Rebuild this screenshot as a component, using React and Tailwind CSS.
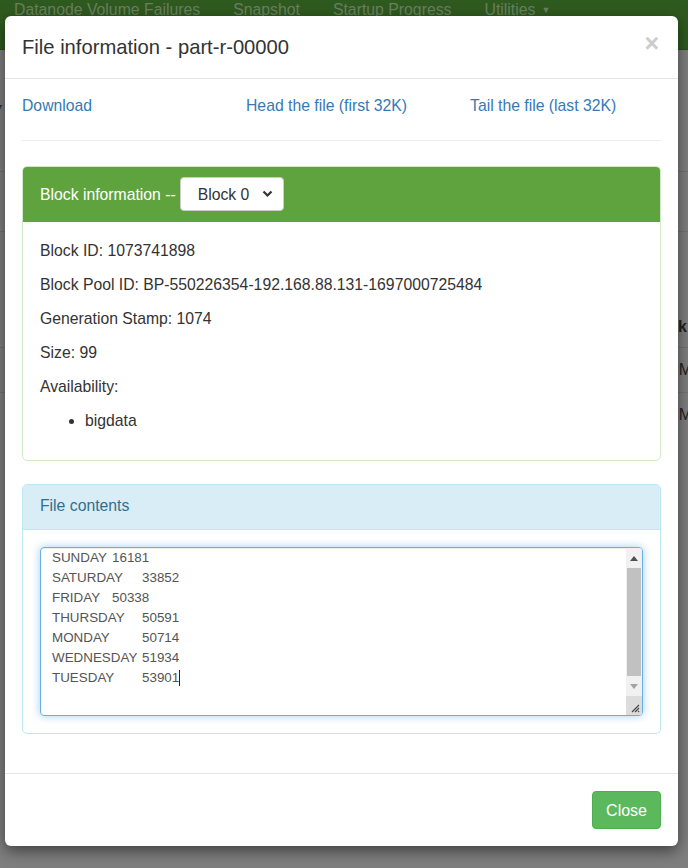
import React from "react";

const rows = [
  { name: "SUNDAY", num: "16181", w: "w-[60px]" },
  { name: "SATURDAY", num: "33852", w: "w-[90px]" },
  { name: "FRIDAY", num: "50338", w: "w-[60px]" },
  { name: "THURSDAY", num: "50591", w: "w-[90px]" },
  { name: "MONDAY", num: "50714", w: "w-[90px]" },
  { name: "WEDNESDAY", num: "51934", w: "w-[90px]" },
  { name: "TUESDAY", num: "53901", w: "w-[90px]", last: true },
];

function BackgroundPage() {
  return (
    <div className="w-[688px] h-[868px] bg-[#7f7f7f] overflow-hidden">
      <div className="h-[50px] bg-[#2f5a1f] border-b border-[#284d1a] flex text-[15.8px] text-[#6a8060] leading-none pt-[2px]">
        <span className="ml-[14px]">Datanode Volume Failures</span>
        <span className="ml-[33px]">Snapshot</span>
        <span className="ml-[33px]">Startup Progress</span>
        <span className="ml-[33px] flex gap-[6px]">
          Utilities
          <span className="text-[9px] mt-[4px]">▼</span>
        </span>
      </div>
      <div className="h-[122px] border-b border-[#727272] pt-[50px] pl-0">
        <span className="block text-[44px] leading-none text-[#333] -ml-[14px] italic font-light">/</span>
      </div>
      <div className="h-[60px] border-b border-[#727272]" />
      <div className="h-[115px] flex justify-end items-end pb-[8px]">
        <span className="text-[16px] font-bold text-[#222] mr-[1px]">k</span>
      </div>
      <div className="h-[45px] border-t border-[#727272] flex justify-end items-center">
        <span className="text-[16px] text-[#222] mr-[-4px]">M</span>
      </div>
      <div className="h-[45px] border-t border-[#727272] flex justify-end items-center">
        <span className="text-[16px] text-[#222] mr-[-4px]">M</span>
      </div>
    </div>
  );
}

function Scrollbar() {
  return (
    <div className="w-[16px] h-full bg-[#f1f1f1] flex flex-col items-center">
      <div className="h-[20px] flex items-center justify-center">
        <svg width="8" height="5" viewBox="0 0 8 5"><path d="M0 5 L4 0 L8 5 Z" fill="#505050" /></svg>
      </div>
      <div className="w-[14px] h-[108px] bg-[#c1c1c1]" />
      <div className="h-[20px] flex items-center justify-center">
        <svg width="8" height="5" viewBox="0 0 8 5"><path d="M0 0 L4 5 L8 0 Z" fill="#a3a3a3" /></svg>
      </div>
      <div className="flex-1 w-full bg-[#dcdcdc] flex items-end justify-end pr-[2px] pb-[2px]">
        <svg width="9" height="9" viewBox="0 0 9 9">
          <path d="M1 8 L8 1 M4 8 L8 4 M7 8 L8 7" stroke="#444" strokeWidth="1.1" />
        </svg>
      </div>
    </div>
  );
}

function Modal() {
  return (
    <div className="absolute left-[5px] top-[16px] w-[673px] bg-white rounded-[6px] shadow-[0_5px_15px_rgba(0,0,0,0.5)] text-[#333] text-[15.75px] leading-[23px]">
      <div className="flex items-start justify-between px-[17px] pt-[17px] pb-[16px] border-b border-[#e5e5e5]">
        <h4 className="text-[20.2px] leading-[29px]">File information - part-r-00000</h4>
        <span className="text-[25px] leading-[22px] font-bold text-[#cccccc] mt-[-1px] mr-[2px]">×</span>
      </div>

      <div className="pt-[15px] px-[17px] pb-[16px]">
        <div className="grid grid-cols-[224px_224px_1fr] text-[#337ab7]">
          <span>Download</span>
          <span>Head the file (first 32K)</span>
          <span>Tail the file (last 32K)</span>
        </div>
        <hr className="mt-[23px] mb-[25px] border-t border-[#eeeeee]" />

        <div className="border border-[#d0e9c6] rounded-[5px] mb-[23px]">
          <div className="bg-[#5fa33e] rounded-t-[4px] px-[17px] pt-[10px] pb-[11px] flex items-center text-white">
            <span>Block information --</span>
            <div className="ml-[4px] w-[104px] h-[34px] bg-white rounded-[4px] border border-[#cccccc] flex items-center justify-between pl-[17px] pr-[10px] text-[#333]">
              <span>Block 0</span>
              <svg width="11" height="8" viewBox="0 0 11 8"><path d="M1.5 1.5 L5.5 5.5 L9.5 1.5" fill="none" stroke="#333" strokeWidth="2.2" /></svg>
            </div>
          </div>
          <div className="pt-[17px] px-[17px] pb-[17px]">
            <p className="mb-[11px]">Block ID: 1073741898</p>
            <p className="mb-[11px]">Block Pool ID: BP-550226354-192.168.88.131-1697000725484</p>
            <p className="mb-[11px]">Generation Stamp: 1074</p>
            <p className="mb-[11px]">Size: 99</p>
            <p className="mb-[11px]">Availability:</p>
            <ul className="list-disc pl-[45px] mb-[11px]">
              <li>bigdata</li>
            </ul>
          </div>
        </div>

        <div className="border border-[#bce8f1] rounded-[5px] mb-[23px]">
          <div className="bg-[#d9edf7] text-[#31708f] rounded-t-[4px] border-b border-[#bce8f1] px-[17px] pt-[9px] pb-[12px]">
            File contents
          </div>
          <div className="pt-[17px] px-[17px] pb-[17px]">
            <div className="h-[169px] border border-[#66afe9] rounded-[4px] shadow-[inset_0_1px_1px_rgba(0,0,0,0.075),0_0_8px_rgba(102,175,233,0.6)] flex overflow-hidden">
              <div className="flex-1 pl-[11px] text-[13.4px] leading-[20px] text-[#555]">
                {rows.map((r) => (
                  <div key={r.name} className="flex">
                    <span className={`inline-block ${r.w}`}>{r.name}</span>
                    <span>{r.num}</span>
                    {r.last && <span className="inline-block w-[1px] h-[16px] bg-[#222] mt-[2px]" />}
                  </div>
                ))}
              </div>
              <Scrollbar />
            </div>
          </div>
        </div>
      </div>

      <div className="border-t border-[#e5e5e5] p-[17px] flex justify-end">
        <button className="h-[38px] px-[13px] bg-[#5cb85c] border border-[#4cae4c] rounded-[4px] text-white text-[16px]">
          Close
        </button>
      </div>
    </div>
  );
}

export default function App() {
  return (
    <div className="relative w-[688px] h-[868px] overflow-hidden font-['Liberation_Sans',Arial,sans-serif]">
      <BackgroundPage />
      <Modal />
    </div>
  );
}
